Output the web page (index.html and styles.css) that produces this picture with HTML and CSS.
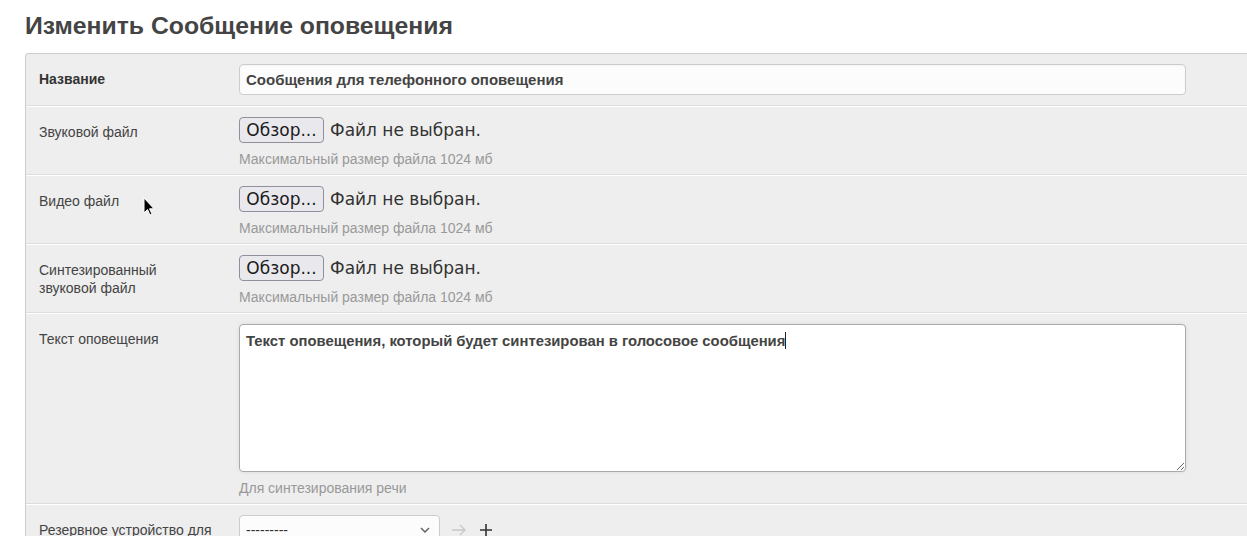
FILE: index.html
```html
<!DOCTYPE html>
<html lang="ru">
<head>
  <meta charset="UTF-8" />
  <title>Изменить Сообщение оповещения</title>
  <link rel="stylesheet" href="styles.css">
</head>
<body>

<div class="content">
  <h1 class="title">Изменить Сообщение оповещения</h1>

  <form class="module">

    <div class="form-row">
      <label class="field-label required" for="id_name">Название</label>
      <div class="field-box">
        <input class="text-input" id="id_name" type="text" value="Сообщения для телефонного оповещения">
      </div>
    </div>

    <div class="form-row">
      <label class="field-label">Звуковой файл</label>
      <div class="field-box">
        <div class="file-input">
          <span class="file-button">Обзор...</span>
          <span class="file-name">Файл не выбран.</span>
        </div>
        <div class="help">Максимальный размер файла 1024 мб</div>
      </div>
    </div>

    <div class="form-row">
      <label class="field-label">Видео файл</label>
      <div class="field-box">
        <div class="file-input">
          <span class="file-button">Обзор...</span>
          <span class="file-name">Файл не выбран.</span>
        </div>
        <div class="help">Максимальный размер файла 1024 мб</div>
      </div>
    </div>

    <div class="form-row">
      <label class="field-label">Синтезированный звуковой файл</label>
      <div class="field-box">
        <div class="file-input">
          <span class="file-button">Обзор...</span>
          <span class="file-name">Файл не выбран.</span>
        </div>
        <div class="help">Максимальный размер файла 1024 мб</div>
      </div>
    </div>

    <div class="form-row">
      <label class="field-label" for="id_text">Текст оповещения</label>
      <div class="field-box">
        <div class="textarea-wrap">
          <textarea class="textarea" id="id_text">Текст оповещения, который будет синтезирован в голосовое сообщения</textarea>
          <span class="caret"></span>
        </div>
        <div class="help">Для синтезирования речи</div>
      </div>
    </div>

    <div class="form-row">
      <label class="field-label">Резервное устройство для</label>
      <div class="field-box related">
        <div class="select">
          <span>---------</span>
          <svg class="chevron" width="10" height="6" viewBox="0 0 10 6"><path d="M1 1l4 4 4-4" fill="none" stroke="#666" stroke-width="1.5"/></svg>
        </div>
        <svg class="related-link disabled" width="16" height="14" viewBox="0 0 16 14"><path d="M1 7h13M9 2l5 5-5 5" fill="none" stroke="#c8c8c8" stroke-width="1.3"/></svg>
        <svg class="related-link add" width="14" height="14" viewBox="0 0 14 14"><path d="M7 1v12M1 7h12" fill="none" stroke="#333" stroke-width="1.6"/></svg>
      </div>
    </div>

  </form>
</div>

<svg class="cursor" width="12" height="20" viewBox="0 0 12 20"><path d="M1 1v15l3.5-3.5 2.5 5.5 2-1-2.5-5.2H11z" fill="#000" stroke="#fff" stroke-width="1"/></svg>

</body>
</html>
```

FILE: styles.css
```css
* {
  box-sizing: border-box;
}

html, body {
  margin: 0;
  padding: 0;
  background: #fff;
  overflow: hidden;
  font-family: "Liberation Sans", Arial, sans-serif;
  color: #444;
}

.content {
  width: 1300px;
  padding-left: 25px;
}

.title {
  margin: 0;
  padding-top: 10px;
  height: 53px;
  font-size: 24.75px;
  line-height: 31px;
  font-weight: bold;
  color: #444;
}

.module {
  margin: 0;
  background: #eee;
  border: 1px solid #ccc;
  border-right: none;
  border-radius: 4px 0 0 0;
}

.form-row {
  display: flex;
  padding: 10px 0 6px;
  border-top: 1px solid #fff;
  border-bottom: 1px solid #ddd;
}

.form-row:first-child {
  border-top: none;
  padding-bottom: 10px;
}

.field-label {
  flex: 0 0 213px;
  padding: 6px 25px 0 13px;
  font-size: 14px;
  line-height: 18px;
  color: #444;
}

.field-label.required {
  font-weight: bold;
  color: #333;
}

.field-box {
  flex: 1;
}

.text-input {
  display: block;
  width: 947px;
  height: 31px;
  margin: 0;
  padding: 0 6px;
  font-family: inherit;
  font-size: 15px;
  font-weight: bold;
  color: #444;
  background: #fcfcfc;
  border: 1px solid #ccc;
  border-radius: 4px;
  box-shadow: inset 0 1px 2px rgba(0, 0, 0, 0.04);
}

.file-input {
  display: flex;
  align-items: center;
  gap: 6px;
  height: 26px;
  font-family: "DejaVu Sans", sans-serif;
  font-size: 17px;
}

.file-button {
  display: flex;
  align-items: center;
  justify-content: center;
  width: 85px;
  height: 26px;
  background: #e9e9ed;
  border: 1px solid #8f8f9d;
  border-radius: 4px;
  color: #1b1b1b;
}

.file-name {
  color: #333;
}

.help {
  margin-top: 7px;
  font-size: 14px;
  line-height: 18px;
  color: #999;
}

.textarea-wrap {
  position: relative;
  width: 947px;
}

.textarea {
  display: block;
  width: 947px;
  height: 148px;
  margin: 0;
  padding: 7px 6px;
  font-family: inherit;
  font-size: 14.84px;
  font-weight: bold;
  line-height: 18px;
  color: #444;
  background: #fff;
  border: 1px solid #aaa;
  border-radius: 4px;
  box-shadow: 0 0 4px rgba(0, 0, 0, 0.08);
  resize: both;
}

.caret {
  position: absolute;
  left: 546px;
  top: 8px;
  width: 1px;
  height: 17px;
  background: #222;
}

.related {
  display: flex;
  align-items: flex-start;
  gap: 10px;
}

.select {
  display: flex;
  align-items: center;
  justify-content: space-between;
  width: 201px;
  height: 30px;
  padding: 0 9px 0 6px;
  background: #fcfcfc;
  border: 1px solid #ccc;
  border-radius: 4px;
  font-size: 14px;
  color: #333;
}

.related-link {
  margin-top: 8px;
}

.related-link.disabled {
  margin-left: 1px;
}

.related-link.add {
  margin-left: 2px;
}

.cursor {
  position: absolute;
  left: 143px;
  top: 197px;
}
```
